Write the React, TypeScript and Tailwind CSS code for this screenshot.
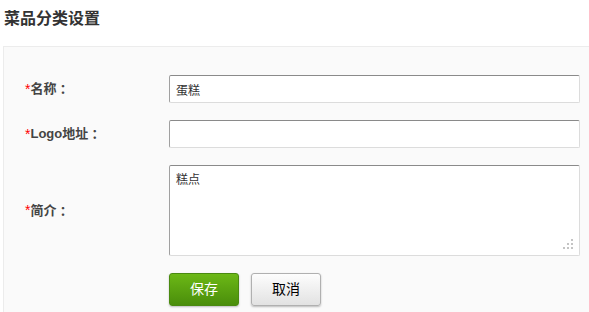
import { FC, ReactNode } from "react";

const FONT = "font-['Liberation_Sans','Noto_Sans_CJK_SC',sans-serif]";

const FieldLabel: FC<{ children: ReactNode }> = ({ children }) => (
  <label className="flex w-[144px] shrink-0 items-center text-[13px] font-bold text-[#444]">
    <span className="text-[14px] font-normal text-[#f00]">*</span>
    {children}
    <span className="font-['Noto_Sans_CJK_JP',sans-serif]">：</span>
  </label>
);

const inputBox =
  "w-[411px] rounded-[2px] border border-t-[#8a8a8a] border-l-[#a0a0a0] border-r-[#dcdcdc] border-b-[#dcdcdc] bg-white px-[6px] text-[12px] text-[#333] outline-none";

const ResizeGrip: FC = () => (
  <svg
    className="pointer-events-none absolute bottom-[6px] right-[6px]"
    width="11"
    height="11"
    viewBox="0 0 11 11"
    aria-hidden
  >
    {[
      [8, 0],
      [4, 4],
      [8, 4],
      [0, 8],
      [4, 8],
      [8, 8],
    ].map(([x, y]) => (
      <rect key={`${x}-${y}`} x={x} y={y} width="2" height="2" fill="#c4c4c4" />
    ))}
  </svg>
);

const App: FC = () => {
  return (
    <div className={`${FONT} min-h-[312px] overflow-hidden bg-white`}>
      <h2 className="px-[4px] pb-[16px] pt-[8px] text-[16px] font-bold leading-[22px] text-[#333]">
        菜品分类设置
      </h2>
      <div className="ml-[3px] border-l border-t border-[#ececec] bg-[#fafafa] pb-[20px] pl-[21px] pt-[28px]">
        <div className="flex flex-col gap-[17px]">
          <div className="flex items-center">
            <FieldLabel>名称</FieldLabel>
            <input className={`${inputBox} h-[28px]`} defaultValue="蛋糕" />
          </div>
          <div className="flex items-center">
            <FieldLabel>Logo地址</FieldLabel>
            <input className={`${inputBox} h-[28px]`} defaultValue="" />
          </div>
          <div className="flex items-center">
            <FieldLabel>简介</FieldLabel>
            <div className="relative">
              <textarea
                className={`${inputBox} block h-[91px] resize-none py-[5px] leading-[18px]`}
                defaultValue="糕点"
              />
              <ResizeGrip />
            </div>
          </div>
          <div className="flex items-center gap-[12px] pl-[144px]">
            <button className="h-[33px] w-[70px] rounded-[3px] border border-[#4a8a10] bg-gradient-to-b from-[#6cb816] to-[#4a8e0b] text-[14px] text-white shadow-[0_1px_2px_rgba(0,0,0,0.25)]">
              保存
            </button>
            <button className="h-[33px] w-[70px] rounded-[3px] border border-[#b0b0b0] bg-gradient-to-b from-[#fdfdfd] to-[#e2e2e2] text-[14px] text-black shadow-[0_1px_2px_rgba(0,0,0,0.25)]">
              取消
            </button>
          </div>
        </div>
      </div>
    </div>
  );
};

export default App;
